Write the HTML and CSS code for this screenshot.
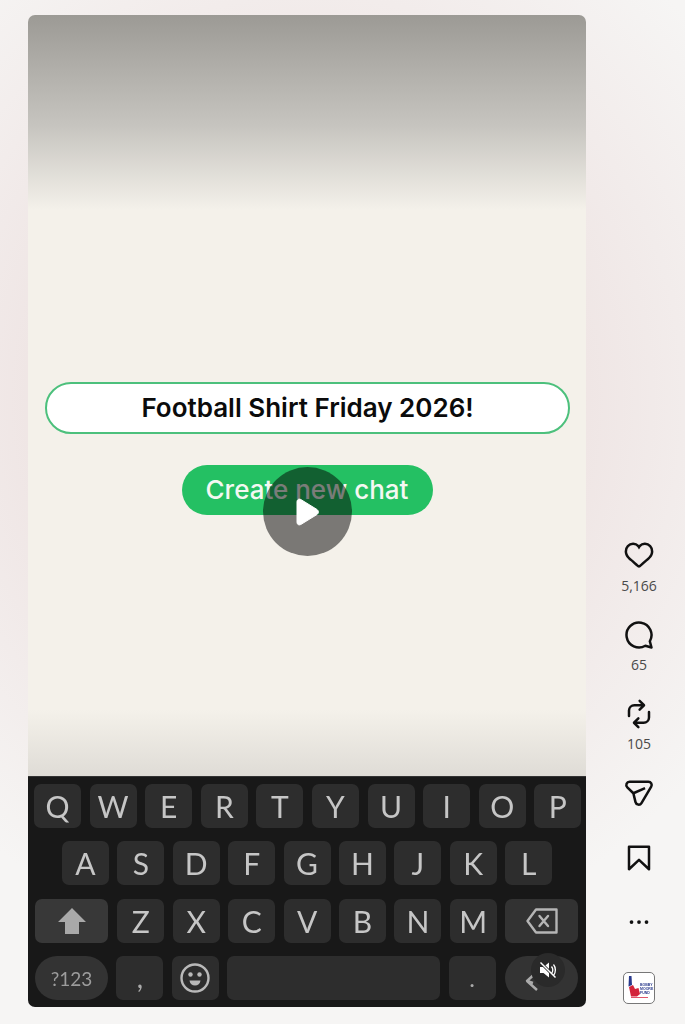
FILE: index.html
```html
<!DOCTYPE html>
<html lang="en">
<head>
  <meta charset="UTF-8" />
  <meta name="viewport" content="width=device-width, initial-scale=1.0"/>
  <title>Football Shirt Friday 2026!</title>
  <link rel="stylesheet" href="styles.css">
</head>
<body>
  <div class="page">
    <div class="video">
      <div class="screen">
        <div class="title-pill">Football Shirt Friday 2026!</div>
        <div class="chat-btn">Create new chat</div>
      </div>

      <div class="keyboard">
        <div class="row">
          <div class="key">Q</div><div class="key">W</div><div class="key">E</div><div class="key">R</div><div class="key">T</div>
          <div class="key">Y</div><div class="key">U</div><div class="key">I</div><div class="key">O</div><div class="key">P</div>
        </div>
        <div class="row row-home">
          <div class="key">A</div><div class="key">S</div><div class="key">D</div><div class="key">F</div><div class="key">G</div>
          <div class="key">H</div><div class="key">J</div><div class="key">K</div><div class="key">L</div>
        </div>
        <div class="row row-shift">
          <div class="key key-wide key-shift">
            <svg width="28" height="26" viewBox="0 0 28 26"><path d="M14 0 28 14H21V26H7V14H0Z" fill="#a9a9a9"/></svg>
          </div>
          <div class="key">Z</div><div class="key">X</div><div class="key">C</div><div class="key">V</div><div class="key">B</div><div class="key">N</div><div class="key">M</div>
          <div class="key key-wide key-back">
            <svg width="32" height="26" viewBox="0 0 32 26" fill="none" stroke="#b5b5b5" stroke-width="2.4" stroke-linejoin="round" stroke-linecap="round">
              <path d="M10 1.500H30.500V24.500H10L1.500 13Z"/>
              <path d="M13.500 8 22 18M22 8 13.500 18"/>
            </svg>
          </div>
        </div>
        <div class="row row-bottom">
          <div class="key key-sym">?123</div>
          <div class="key key-comma">,</div>
          <div class="key">
            <svg width="30" height="30" viewBox="0 0 30 30">
              <circle cx="15" cy="15" r="13.500" fill="none" stroke="#b9b9b9" stroke-width="2.400"/>
              <circle cx="10.500" cy="11.500" r="2.200" fill="#b9b9b9"/>
              <circle cx="19.500" cy="11.500" r="2.200" fill="#b9b9b9"/>
              <path d="M9.500 17.500H20.500C20 21 18 22.500 15 22.500S10 21 9.500 17.500Z" fill="#b9b9b9"/>
            </svg>
          </div>
          <div class="key key-space"></div>
          <div class="key key-period">.</div>
          <div class="key key-enter">
            <svg width="14" height="18" viewBox="0 0 14 18" fill="none" stroke="#aaa" stroke-width="2.400" stroke-linejoin="round">
              <path d="M8 1.500 2 7 8 9M2 7 12 16"/>
            </svg>
          </div>
        </div>
      </div>

      <div class="play">
        <svg width="26" height="28" viewBox="0 0 26 28"><path d="M3 3.500C3 1.500 5 .5 6.800 1.500L23 11.500C24.800 12.600 24.800 15.400 23 16.500L6.800 26.500C5 27.500 3 26.500 3 24.500Z" fill="#fff" stroke="#fff" stroke-linejoin="round"/></svg>
      </div>
      <div class="mute">
        <svg width="18" height="18" viewBox="0 0 18 18">
          <path d="M1 6H4.500L10 1.500V16.500L4.500 12H1Z" fill="#fff"/>
          <path d="M1.500 1.500 16.500 16.500" stroke="#2a2a2a" stroke-width="3"/>
          <path d="M1.500 1.500 16.500 16.500" stroke="#fff" stroke-width="1.400"/>
          <path d="M12.500 5.500C14 7.500 14 10.500 12.500 12.500M14.500 3.500C17 6.500 17 11.500 14.500 14.500" fill="none" stroke="#fff" stroke-width="1.300"/>
        </svg>
      </div>
    </div>

    <div class="rail">
      <div class="stat stat-like">
        <svg class="icon" viewBox="0 0 24 24"><path d="M16.792 3.904A4.989 4.989 0 0 1 21.5 9.122c0 3.072-2.652 4.959-5.197 7.222-2.512 2.243-3.865 3.469-4.303 3.752-.477-.309-2.143-1.823-4.303-3.752C5.141 14.072 2.5 12.167 2.5 9.122a4.989 4.989 0 0 1 4.708-5.218 4.21 4.21 0 0 1 3.675 1.941c.84 1.175.98 1.763 1.12 1.763s.278-.588 1.11-1.766a4.17 4.17 0 0 1 3.679-1.938m0-2a6.04 6.04 0 0 0-4.797 2.127 6.052 6.052 0 0 0-4.787-2.127A6.985 6.985 0 0 0 .5 9.122c0 3.61 2.55 5.827 5.015 7.97.283.246.569.494.853.747l1.027.918a44.998 44.998 0 0 0 3.518 3.018 2 2 0 0 0 2.174 0 45.263 45.263 0 0 0 3.626-3.115l.922-.824c.293-.26.59-.519.885-.774 2.334-2.025 4.98-4.32 4.98-7.94a6.985 6.985 0 0 0-6.708-7.218Z"/></svg>
        <span class="count">5,166</span>
      </div>
      <div class="stat">
        <svg class="icon" viewBox="0 0 24 24"><path class="line" d="M20.656 17.008a9.993 9.993 0 1 0-3.59 3.615L22 22Z"/></svg>
        <span class="count">65</span>
      </div>
      <div class="stat">
        <svg class="icon" viewBox="0 0 24 24"><path d="M19.998 9.497a1 1 0 0 0-1 1v4.228a3.274 3.274 0 0 1-3.27 3.27h-5.313l1.791-1.787a1 1 0 0 0-1.412-1.416L7.29 18.287a1.004 1.004 0 0 0-.294.707v.001c0 .023.012.042.013.065a.923.923 0 0 0 .281.643l3.502 3.504a1 1 0 0 0 1.414-1.414l-1.797-1.798h5.318a5.276 5.276 0 0 0 5.27-5.27v-4.228a1 1 0 0 0-1-1Zm-6.41-3.496-1.795 1.795a1 1 0 1 0 1.414 1.414l3.5-3.5a1.003 1.003 0 0 0 0-1.417l-3.5-3.5a1 1 0 0 0-1.414 1.414l1.794 1.794H8.27A5.277 5.277 0 0 0 3 9.271V13.5a1 1 0 0 0 2 0V9.271a3.275 3.275 0 0 1 3.271-3.27Z"/></svg>
        <span class="count">105</span>
      </div>
      <svg class="icon" viewBox="0 0 24 24">
        <path class="line" d="M13.973 20.046 21.77 6.928C22.8 5.195 21.55 3 19.535 3H4.466C2.138 3 .984 5.825 2.646 7.456l4.842 4.752 1.723 7.121c.548 2.266 3.571 2.721 4.762.717Z"/>
        <path class="line" d="M7.488 12.208 16.863 8.1"/>
      </svg>
      <svg class="icon bookmark" viewBox="0 0 24 24"><path class="line" d="M20 21 12 13.44 4 21V3H20Z"/></svg>
      <svg class="icon spaced" viewBox="0 0 24 24"><circle cx="12" cy="12" r="1.500"/><circle cx="6" cy="12" r="1.500"/><circle cx="18" cy="12" r="1.500"/></svg>
      <div class="avatar">
        <svg width="30" height="30" viewBox="0 0 30 30">
          <path d="M5 3H7.500L8 12 4.500 13.500Z" fill="#2a3a8c"/>
          <path d="M5 14 9 12 11 16 14.500 15 16 21 13 23.500H7Z" fill="#d3243a"/>
          <text class="avatar-text" x="16" y="12.500">BOBBY</text>
          <text class="avatar-text" x="16" y="16.500">MOORE</text>
          <text class="avatar-text" x="16" y="20.500">FUND</text>
          <path d="M7 24.500H24" stroke="#e0566a" stroke-width="1"/>
        </svg>
      </div>
    </div>
  </div>
</body>
</html>
```

FILE: styles.css
```css
html, body {
  margin: 0;
  height: 100%;
}

body {
  overflow: hidden;
  font-family: "Open Sans", sans-serif;
  background:
    radial-gradient(ellipse 520px 560px at 307px 400px, #eee3e2 45%, rgba(238, 227, 226, 0) 100%),
    #f6f5f4;
}

.page {
  display: flex;
  padding: 15px 0 0 28px;
}

.video {
  position: relative;
  width: 558px;
  height: 992px;
  border-radius: 7px;
  overflow: hidden;
  flex-shrink: 0;
}

.screen {
  height: 761px;
  box-sizing: border-box;
  padding-top: 367px;
  display: flex;
  flex-direction: column;
  align-items: center;
  background: linear-gradient(#9c9a95 0, #c6c4bf 110px, #f4f1ea 195px, #f4f1ea 695px, #dfdcd6 761px);
}

.title-pill {
  width: 525px;
  height: 52px;
  box-sizing: border-box;
  margin-left: 1px;
  border: 2.500px solid #4cc07c;
  border-radius: 26px;
  background: #fff;
  color: #0b0b0b;
  font-family: Inter, sans-serif;
  font-size: 26px;
  font-weight: 600;
  line-height: 47px;
  text-align: center;
}

.chat-btn {
  width: 251px;
  height: 50px;
  margin-top: 31px;
  border-radius: 25px;
  background: #24c063;
  color: #f4f8f2;
  font-family: Inter, sans-serif;
  font-size: 26px;
  font-weight: 500;
  line-height: 50px;
  text-align: center;
}

.keyboard {
  height: 231px;
  box-sizing: border-box;
  padding-top: 6.500px;
  display: flex;
  flex-direction: column;
  gap: 13.500px;
  background: #181818;
  border-top: 1px solid #333;
  font-family: Lato, sans-serif;
  filter: blur(0.4px);
}

.row {
  display: flex;
  gap: 8.600px;
  padding-left: 6px;
}

.row-home {
  gap: 8.400px;
  padding-left: 34px;
}

.row-shift,
.row-bottom {
  gap: 8.400px;
  padding-left: 7px;
}

.key {
  width: 47px;
  height: 44px;
  flex-shrink: 0;
  display: flex;
  align-items: center;
  justify-content: center;
  border-radius: 7px;
  background: #2d2d2d;
  color: #c6c6c6;
  font-size: 30px;
  font-weight: 400;
}

.key-wide {
  width: 73px;
  background: #383838;
}

.key-shift {
  margin-right: 1px;
}

.key-wide.key-back {
  background: #323232;
}

.key-sym {
  width: 73px;
  border-radius: 22px;
  background: #333;
  color: #9c9c9c;
  font-size: 19px;
}

.key-comma {
  align-items: flex-end;
  padding-bottom: 6px;
  height: 38px;
  font-size: 28px;
  color: #aaa;
}

.key-space {
  width: 213px;
}

.key-period {
  align-items: flex-end;
  padding-bottom: 8px;
  height: 36px;
  font-size: 24px;
  color: #aaa;
}

.key-enter {
  width: 73px;
  margin-left: 1.500px;
  border-radius: 22px;
  background: #333;
  justify-content: flex-start;
  padding-left: 20px;
  box-sizing: border-box;
  padding-top: 10px;
}

.play {
  position: absolute;
  left: 234.500px;
  top: 452px;
  width: 89px;
  height: 89px;
  border-radius: 50%;
  background: rgba(0, 0, 0, 0.5);
  display: flex;
  align-items: center;
  justify-content: center;
}

.mute {
  position: absolute;
  left: 503px;
  top: 938px;
  width: 34px;
  height: 34px;
  border-radius: 50%;
  background: #2a2a2a;
  display: flex;
  align-items: center;
  justify-content: center;
}

.rail {
  width: 74px;
  margin-left: 16px;
  padding-top: 525px;
  display: flex;
  flex-direction: column;
  align-items: center;
  gap: 24px;
}

.stat {
  display: flex;
  flex-direction: column;
  align-items: center;
  gap: 5px;
}

.stat-like {
  gap: 6px;
}

.icon {
  display: block;
  width: 30px;
  height: 30px;
  fill: #111;
}

.icon.spaced {
  margin-top: 10px;
}

.icon.bookmark {
  margin-top: 11px;
}

.line {
  fill: none;
  stroke: #111;
  stroke-width: 2;
  stroke-linejoin: round;
}

.count {
  color: #4a4a4a;
  font-size: 14px;
  line-height: 20px;
}

.avatar {
  margin-top: 11px;
  width: 32px;
  height: 32px;
  box-sizing: border-box;
  border: 1px solid #777;
  border-radius: 5px;
  background: #fff;
  filter: blur(0.3px);
}

.avatar svg {
  display: block;
}

.avatar-text {
  fill: #2a3a8c;
  font-family: "Liberation Sans", sans-serif;
  font-size: 3.500px;
  font-weight: bold;
}
```
